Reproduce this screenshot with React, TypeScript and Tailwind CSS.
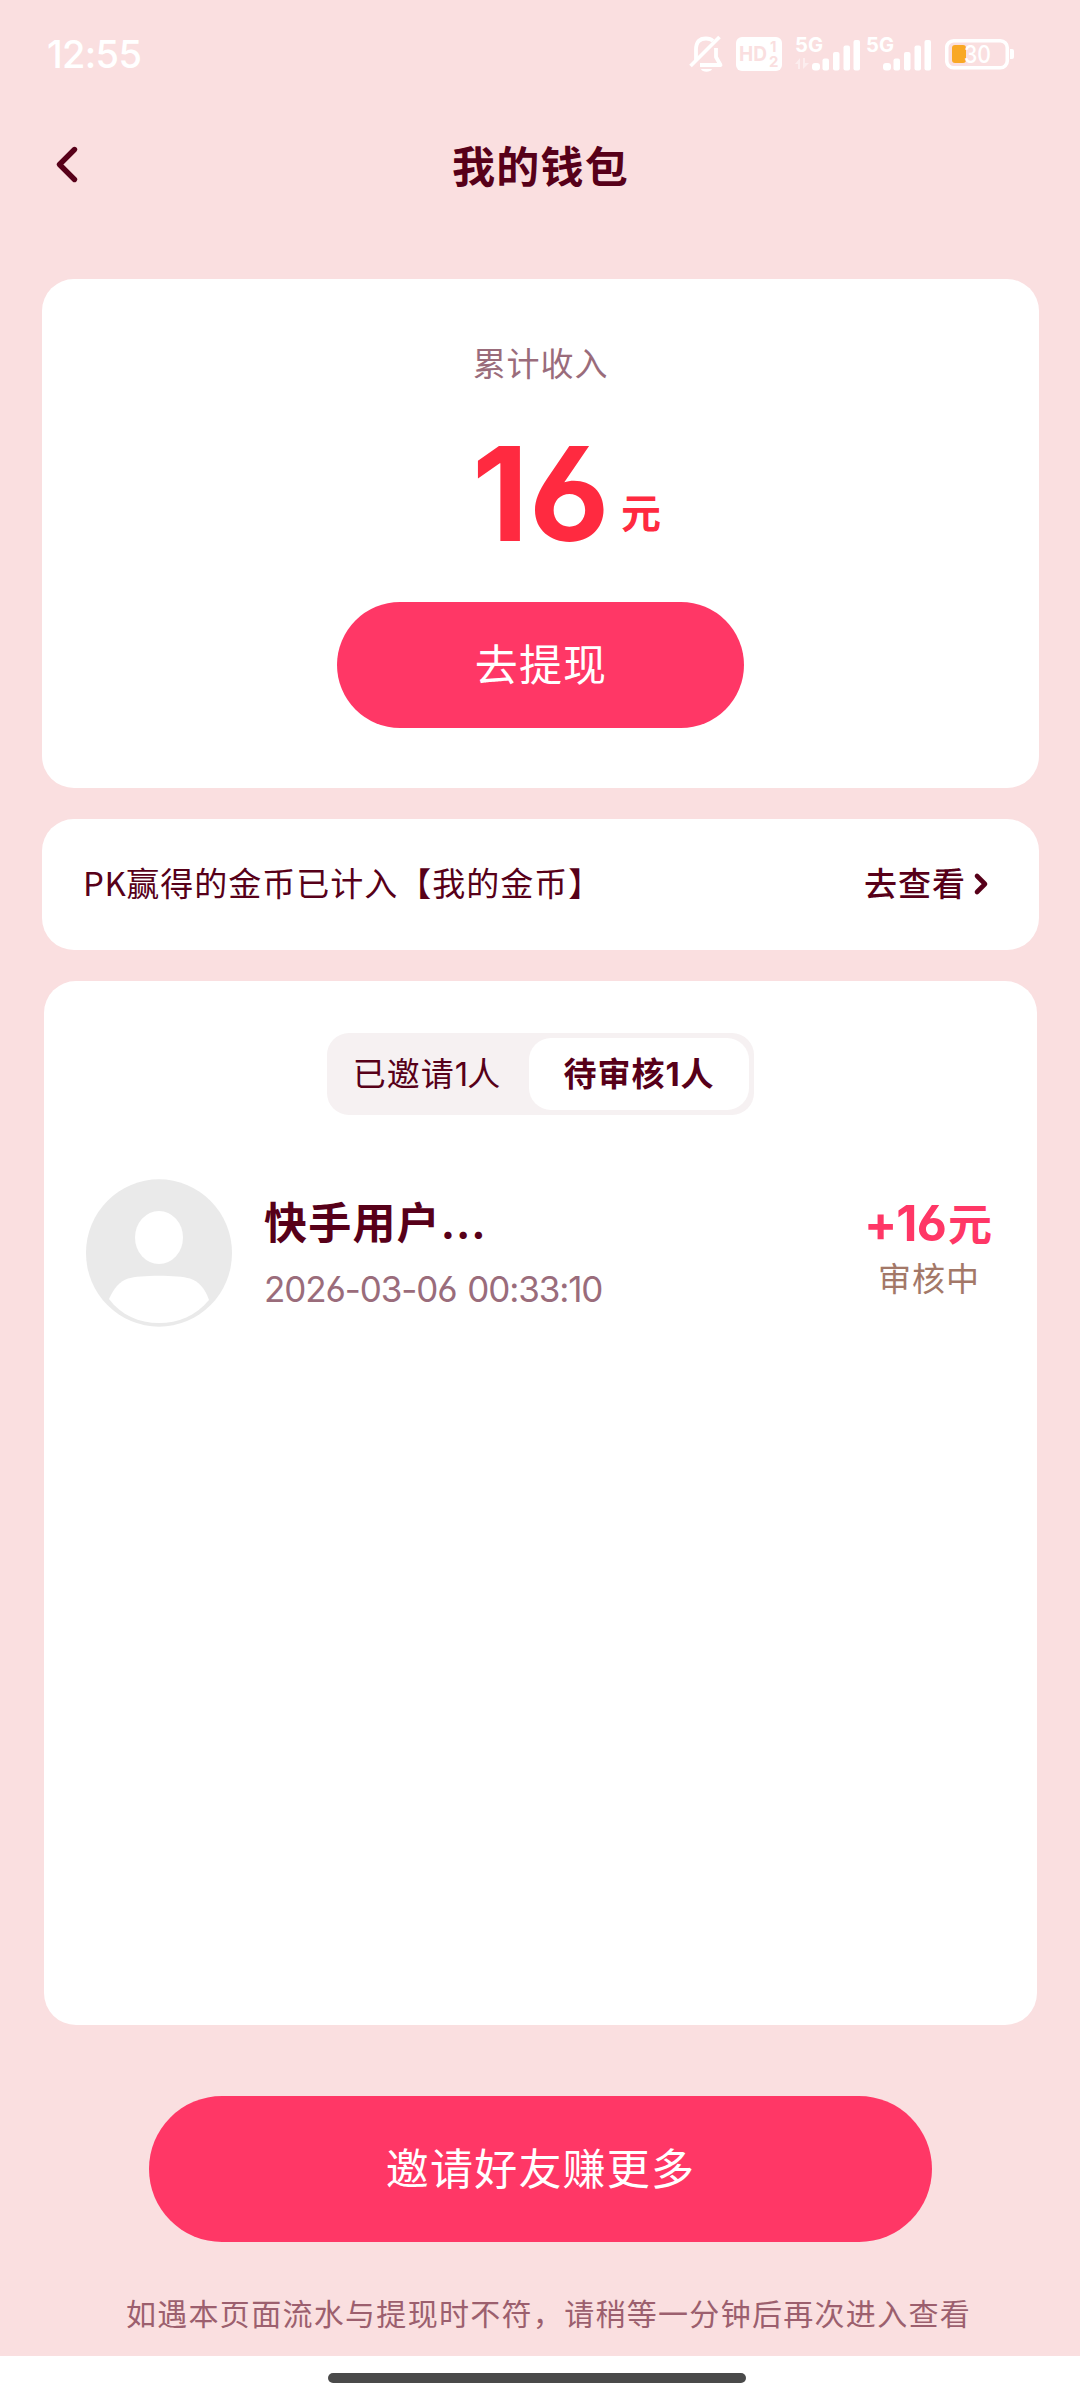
import type { ReactNode } from 'react'

type Invitee = {
  id: string
  name: string
  time: string
  amount: number
  status: string
}

const INVITEES: Invitee[] = [
  { id: '1', name: '快手用户', time: '2026-03-06 00:33:10', amount: 16, status: '审核中' },
]

function MuteIcon() {
  return (
    <svg width="36" height="40" viewBox="0 0 36 40" fill="none" stroke="#fff" strokeWidth="3.8" strokeLinejoin="round">
      <path d="M8 26 V16 C8 8 12 4.5 18 4.5 C21 4.5 23 5 25 7" />
      <path d="M28 14 V23 L32.5 31 H12" />
      <path d="M2.5 32 L31.5 3" />
      <path d="M13 35 H24 C23 38.5 14 38.5 13 35 Z" fill="#fff" stroke="none" />
    </svg>
  )
}

function HdIcon() {
  return (
    <svg width="46" height="34" viewBox="0 0 46 34" className="font-[Inter] font-bold" fill="#fadfe0">
      <rect width="46" height="34" rx="6" fill="#fff" />
      <text x="3" y="24" fontSize="20" textLength="28" lengthAdjust="spacingAndGlyphs">HD</text>
      <text x="34" y="15" fontSize="15">1</text>
      <text x="33" y="30" fontSize="15">2</text>
    </svg>
  )
}

function SignalIcon({ data }: { data?: boolean }) {
  return (
    <svg width="66" height="40" viewBox="0 -4 66 40" fill="#fff" className="overflow-visible font-[Inter] font-bold">
      <text x="0" y="15" fontSize="20" textLength="28" lengthAdjust="spacingAndGlyphs">5G</text>
      {data && (
        <g opacity="0.45">
          <path d="M0 27 L5 21 V32 H3 V27 Z" />
          <path d="M14 26 L8 32 V21 H10 V26 Z" />
        </g>
      )}
      <rect x="17" y="26" width="8" height="7.5" rx="3" />
      <rect x="27.5" y="21.5" width="6.5" height="12" rx="2" />
      <rect x="38" y="15" width="6.5" height="18.5" rx="2" />
      <rect x="48.5" y="8.5" width="6.5" height="25" rx="2" />
      <rect x="58.5" y="3" width="6.5" height="30.5" rx="2" />
    </svg>
  )
}

function BatteryIcon() {
  return (
    <svg width="70" height="32" viewBox="0 0 70 32" fill="none">
      <rect x="1.7" y="2.7" width="60.6" height="27" rx="7" stroke="#fff" strokeWidth="3.6" />
      <path d="M65 11 H67 Q69 11 69 13 V19 Q69 21 67 21 H65 Z" fill="#fff" />
      <rect x="7" y="7" width="14" height="18" rx="3" fill="#f9a825" />
      <text x="19" y="24.5" fontSize="24" fill="#fff" className="font-[Inter] font-medium" textLength="27" lengthAdjust="spacingAndGlyphs">30</text>
    </svg>
  )
}

function StatusBar() {
  return (
    <div className="flex h-[110px] items-start justify-between pl-[47px] pr-[65px] pt-[34px]">
      <span className="mt-[-2px] font-[Inter] text-[38px] font-medium leading-[44px] tracking-[-0.7px] text-white">12:55</span>
      <div className="flex items-start">
        <MuteIcon />
        <div className="ml-[12px] mt-[3px]"><HdIcon /></div>
        <div className="ml-[13px] mt-[-1px]"><SignalIcon data /></div>
        <div className="ml-[5px] mt-[-1px]"><SignalIcon /></div>
        <div className="ml-[13px] mt-[4px]"><BatteryIcon /></div>
      </div>
    </div>
  )
}

function Avatar() {
  return (
    <svg width="146" height="148" viewBox="0 0 146 148" className="shrink-0">
      <ellipse cx="73" cy="74" rx="73" ry="73.7" fill="#eaeaea" />
      <ellipse cx="73" cy="58.5" rx="24" ry="26.5" fill="#fff" />
      <path d="M23 120 C28 109 34 102 42 99.5 C54 95.8 92 95.8 104 99.5 C112 102 119 109 123 121 C110 137 92 144 73 144 C53 144 35 136 23 120 Z" fill="#fff" />
    </svg>
  )
}

function PillButton({ className, children }: { className: string; children: ReactNode }) {
  return (
    <button className={`flex items-center justify-center rounded-full bg-[#ff3766] pb-[5px] pl-[1px] text-[43px] leading-none tracking-[1.2px] text-white ${className}`}>
      {children}
    </button>
  )
}

function InviteeRow({ item }: { item: Invitee }) {
  return (
    <li className="flex items-start pl-[42px] pr-[45px]">
      <Avatar />
      <div className="ml-[32px] mt-[15px]">
        <p className="text-[43px] font-bold leading-[52px] tracking-[1.2px]">
          {item.name}
          <span className="font-[Inter] tracking-[0.8px]">...</span>
        </p>
        <p className="mt-[19px] whitespace-nowrap font-[Inter] text-[35px] leading-[42px] tracking-[-1.1px] text-[#9a6c7b] [font-feature-settings:'cv03'] [word-spacing:2px]">
          {item.time}
        </p>
      </div>
      <div className="ml-auto flex flex-col items-center">
        <p className="mt-[17px] flex items-baseline font-bold leading-[52px] text-[#ff3766]">
          <span className="font-[Inter] text-[49px] tracking-[-0.8px] [font-feature-settings:'cv03']">+{item.amount}</span>
          <span className="ml-[2px] text-[44px]">元</span>
        </p>
        <p className="mt-[7px] pl-[2px] text-[33px] leading-[40px] tracking-[1px] text-[#a37868]">{item.status}</p>
      </div>
    </li>
  )
}

export default function App() {
  return (
    <div className="flex h-[2400px] w-[1080px] flex-col overflow-hidden bg-[#fadfe0] font-['Noto_Sans_CJK_SC',sans-serif] text-[#570019]">
      <StatusBar />

      {/* Header */}
      <header className="grid h-[169px] grid-cols-3 items-start px-[53px]">
        <svg width="28" height="40" viewBox="0 0 28 40" fill="none" stroke="#570019" strokeWidth="5.4" strokeLinecap="round" strokeLinejoin="round" className="mt-[34px]">
          <path d="M21.5 5.5 L6.5 20.5 L21.5 35.5" />
        </svg>
        <h1 className="mt-[28px] pl-[1px] text-center text-[43px] font-bold leading-[52px] tracking-[1.2px]">我的钱包</h1>
      </header>

      {/* Income */}
      <section className="ml-[42px] mr-[41px] flex h-[509px] flex-col items-center rounded-[32px] bg-white">
        <p className="mt-[63px] text-[33px] leading-[40px] tracking-[0.9px] text-[#9a6c7b]">累计收入</p>
        <div className="ml-[52px] mt-[32px] flex h-[152px] items-baseline font-bold text-[#ff2a40]">
          <span className="font-[Inter] text-[131px] leading-[160px] tracking-[0.5px] [font-feature-settings:'cv03']">16</span>
          <span className="relative -top-[13px] ml-[11px] text-[40px] leading-none">元</span>
        </div>
        <PillButton className="mt-[36px] h-[126px] w-[407px]">去提现</PillButton>
      </section>

      {/* Coins */}
      <section className="ml-[42px] mr-[41px] mt-[31px] flex h-[131px] shrink-0 items-center justify-between rounded-[32px] bg-white pb-[3px] pl-[41px] pr-[50px] text-[33px]">
        <p className="tracking-[1px]">
          <span className="tracking-[0.5px]">PK</span>赢得的金币已计入【我的金币】
        </p>
        <a className="flex items-center font-medium tracking-[1px]">
          去查看
          <svg width="16" height="26" viewBox="0 0 16 26" fill="none" stroke="#570019" strokeWidth="4.6" strokeLinecap="round" strokeLinejoin="round" className="ml-[7px] mt-[2px]">
            <path d="M4 5 L12 13 L4 21" />
          </svg>
        </a>
      </section>

      {/* Invitees */}
      <section className="ml-[44px] mr-[43px] mt-[31px] h-[1044px] shrink-0 rounded-[32px] bg-white">
        <div className="mx-auto mt-[52px] flex h-[82px] w-[427px] items-center rounded-[22px] bg-[#f6f1f2] px-[5px] text-[33px] tracking-[1px]">
          <button className="h-[72px] w-[197px] whitespace-nowrap pr-[7px]">
            已邀请<span className="font-[Inter] tracking-[-1px]">1</span>人
          </button>
          <button className="h-[72px] w-[220px] whitespace-nowrap rounded-[22px] bg-white font-bold">
            待审核<span className="font-[Inter]">1</span>人
          </button>
        </div>
        <ul className="mt-[64px]">
          {INVITEES.map((item) => (
            <InviteeRow key={item.id} item={item} />
          ))}
        </ul>
      </section>

      <PillButton className="mx-auto mt-[71px] h-[146px] w-[783px] shrink-0">邀请好友赚更多</PillButton>
      <p className="mt-[50px] whitespace-nowrap pl-[17px] text-center text-[30px] leading-[40px] tracking-[1.3px] text-[#9c5f6e]">
        如遇本页面流水与提现时不符，请稍等一分钟后再次进入查看
      </p>

      {/* Gesture bar */}
      <div className="mt-auto flex h-[44px] shrink-0 justify-center bg-white pr-[6px] pt-[17px]">
        <div className="h-[10px] w-[418px] rounded-full bg-[#4a4a4a]" />
      </div>
    </div>
  )
}
